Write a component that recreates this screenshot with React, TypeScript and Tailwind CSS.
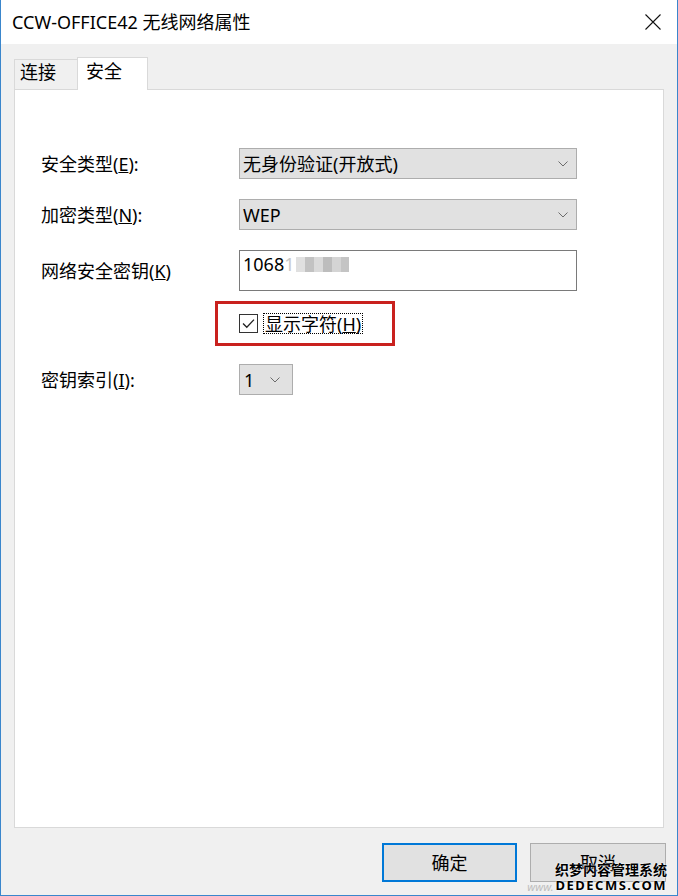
import { ReactNode } from 'react';

const font = "font-['Noto_Sans','Noto_Sans_CJK_SC',sans-serif]";

function Chevron() {
  return (
    <svg width="10" height="6" viewBox="0 0 10 6" className="shrink-0">
      <path d="M0.5 0.5 L5 5 L9.5 0.5" fill="none" stroke="#6b6b6b" strokeWidth="1" />
    </svg>
  );
}

function Select({ value, width }: { value: string; width: string }) {
  return (
    <div className={`${width} h-[31px] border border-[#adadad] bg-[#e1e1e1] flex items-center justify-between pl-[3px] pr-[8px]`}>
      <span className="text-[18px] leading-none text-black">{value}</span>
      <Chevron />
    </div>
  );
}

function Row({ label, children, className = '' }: { label: ReactNode; children: ReactNode; className?: string }) {
  return (
    <div className={`flex items-center ${className}`}>
      <div className="w-[198px] text-[18px] leading-none text-black">{label}</div>
      {children}
    </div>
  );
}

export default function App() {
  return (
    <div className={`${font} relative w-[678px] h-[896px] flex flex-col border-x border-b border-[#3a86cc] bg-white`}>
      {/* Title bar */}
      <div className="h-[44px] shrink-0 flex items-center justify-between pl-[11px] pr-[16px] bg-white">
        <span className="text-[18px] leading-none text-black">CCW-OFFICE42 无线网络属性</span>
        <svg width="16" height="16" viewBox="0 0 16 16">
          <path d="M0.5 0.5 L15.5 15.5 M15.5 0.5 L0.5 15.5" stroke="#111" strokeWidth="1.1" />
        </svg>
      </div>

      {/* Body */}
      <div className="flex-1 flex flex-col bg-[#f0f0f0] px-[13px] pt-[13px]">
        {/* Tabs */}
        <div className="h-[32px] flex items-end">
          <div className="w-[64px] h-[30px] border border-b-0 border-[#d9d9d9] bg-[#f0f0f0] pl-[5px] pt-[3px] text-[18px] leading-none text-black">
            连接
          </div>
          <div className="relative z-10 -mb-px -ml-px w-[71px] h-[33px] border border-b-0 border-[#d9d9d9] bg-white pl-[8px] pt-[4px] text-[18px] leading-none text-black">
            安全
          </div>
        </div>

        {/* Panel */}
        <div className="h-[739px] border border-[#d9d9d9] bg-white pl-[26px] pt-[58px]">
          <Row label={<>安全类型(<span className="underline">E</span>):</>}>
            <Select value="无身份验证(开放式)" width="w-[338px]" />
          </Row>
          <Row className="mt-[20px]" label={<>加密类型(<span className="underline">N</span>):</>}>
            <Select value="WEP" width="w-[338px]" />
          </Row>
          <Row className="mt-[20px]" label={<>网络安全密钥(<span className="underline">K</span>)</>}>
            <div className="w-[338px] h-[41px] border border-[#7a7a7a] bg-white flex items-start pl-[3px] pt-[4px]">
              <span className="text-[18px] leading-none text-black">1068</span>
              <span className="text-[18px] leading-none text-[#c8c8c8]">1</span>
              <div className="flex mt-[2px] ml-[2px]">
                <div className="w-[9px] h-[15px] bg-[#e0e0e0]" />
                <div className="w-[9px] h-[15px] bg-[#c2c2c2]" />
                <div className="w-[9px] h-[15px] bg-[#dadada]" />
                <div className="w-[9px] h-[15px] bg-[#bdbdbd]" />
                <div className="w-[9px] h-[15px] bg-[#d4d4d4]" />
                <div className="w-[8px] h-[15px] bg-[#c4c4c4]" />
              </div>
            </div>
          </Row>

          {/* Show characters, highlighted */}
          <div className="mt-[10px] ml-[174px] w-[180px] h-[45px] border-[3px] border-[#c9211e] flex items-center pl-[21px]">
            <div className="w-[19px] h-[19px] border border-[#333] bg-white flex items-center justify-center">
              <svg width="15" height="15" viewBox="0 0 15 15">
                <path d="M2 7.5 L5.8 11.3 L13 3.6" fill="none" stroke="#222" strokeWidth="1.3" />
              </svg>
            </div>
            <span className="ml-[5px] border border-dotted border-black px-[1px] h-[21px] flex items-center text-[18px] leading-none text-black">
              显示字符(<span className="underline">H</span>)
            </span>
          </div>

          <Row className="mt-[18px]" label={<>密钥索引(<span className="underline">I</span>):</>}>
            <div className="w-[54px] h-[31px] border border-[#adadad] bg-[#e1e1e1] flex items-center justify-between pl-[4px] pr-[12px]">
              <span className="text-[18px] leading-none text-black">1</span>
              <Chevron />
            </div>
          </Row>
        </div>

        {/* Buttons */}
        <div className="flex justify-end gap-[13px] pt-[15px] -mr-[2px]">
          <button className="w-[135px] h-[39px] border-2 border-[#0078d7] bg-[#e1e1e1] text-[18px] leading-none text-black">
            确定
          </button>
          <button className="w-[136px] h-[39px] border border-[#adadad] bg-[#e1e1e1] text-[18px] leading-none text-black">
            取消
          </button>
        </div>
      </div>

      {/* Watermark (overlays the cancel button, as in the screenshot) */}
      <div className="absolute right-[10px] bottom-[3px] flex flex-col items-end leading-none">
        <span className="text-[14px] font-bold text-black [text-shadow:0_0_2px_#fff,0_0_1px_#fff]">织梦内容管理系统</span>
        <div className="flex items-end mt-[2px]">
          <span className="text-[11px] italic text-[#bdbdbd] mr-[2px]">www.</span>
          <span className="text-[13px] font-bold tracking-[1.5px] text-black [text-shadow:0_0_2px_#fff,0_0_1px_#fff]">DEDECMS.COM</span>
        </div>
      </div>
    </div>
  );
}
